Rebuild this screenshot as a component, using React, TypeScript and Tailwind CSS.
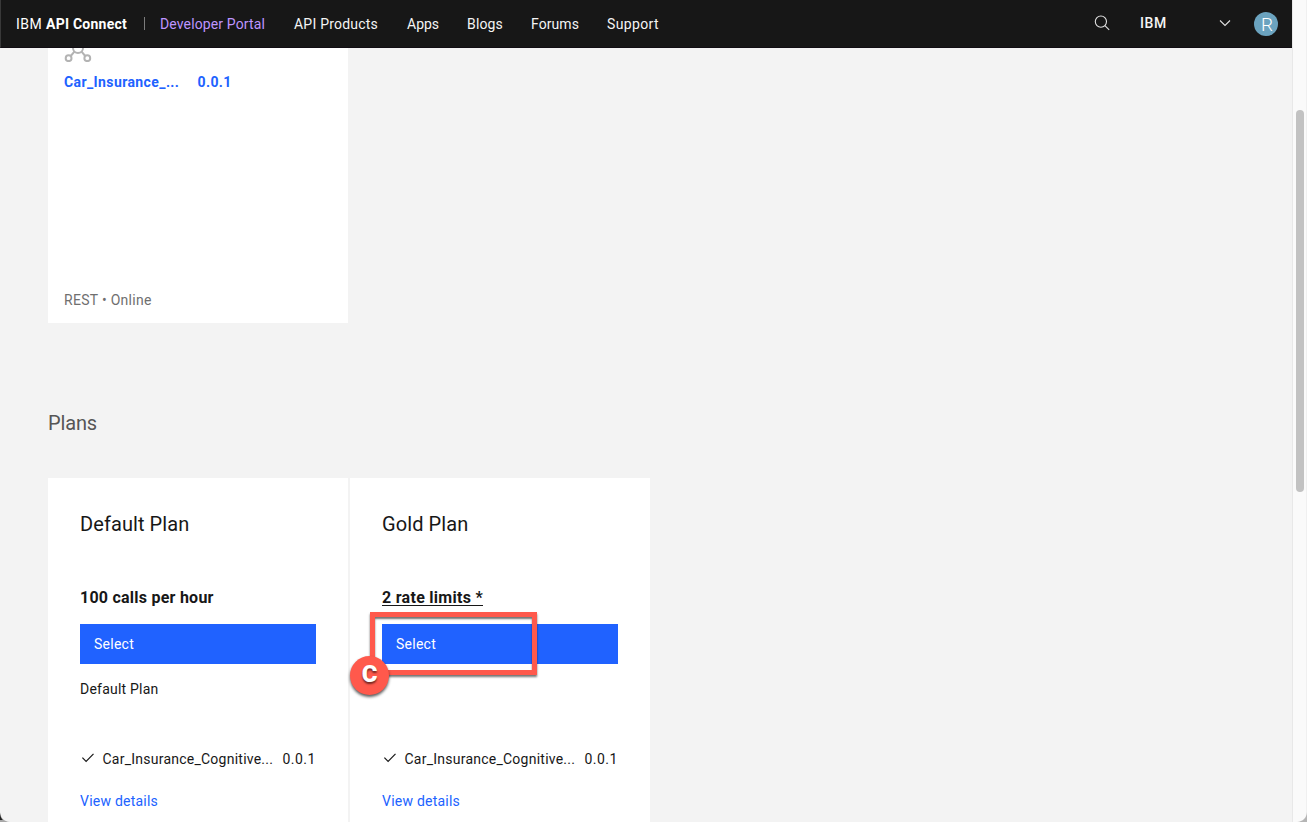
import React from "react";

const NAV = [
  { label: "API Products", className: "w-[113px] tracking-[0.22px]" },
  { label: "Apps", className: "w-[60px]" },
  { label: "Blogs", className: "w-16 tracking-[0.16px]" },
  { label: "Forums", className: "w-[76px] tracking-[0.08px]" },
  { label: "Support", className: "w-[52px] tracking-[0.35px]" },
];

function Header() {
  return (
    <header className="flex h-12 w-full shrink-0 items-center border-b border-l border-b-[#110d13] border-l-[#393939] bg-[#171717] pr-3.5 pl-[15px] text-sm leading-[18px] text-[#f4f4f4]">
      <div className="flex w-32 whitespace-pre text-white">
        <span className="w-[30px] tracking-[0.44px]">IBM </span>
        <b className="font-bold tracking-[0.24px]">API Connect</b>
      </div>
      <div className="h-[13px] w-px bg-[#7c7c7c]" />
      <a className="ml-[15px] w-[134px] tracking-[0.13px] text-[#be95ff]">Developer Portal</a>
      <nav className="flex">
        {NAV.map((item) => (
          <a key={item.label} className={item.className}>
            {item.label}
          </a>
        ))}
      </nav>
      <div className="ml-auto flex items-center">
        <svg className="mr-[30px] -mt-px size-4" viewBox="0 0 16 16" fill="none" stroke="#e0e0e0" strokeWidth="1.1">
          <circle cx="6.9" cy="6.6" r="5.6" />
          <path d="M10.9 10.6 15.2 14.9" />
        </svg>
        <span className="-mt-0.5 w-[79px] font-medium tracking-[0.6px]">IBM</span>
        <svg className="mr-[23px] -mt-0.5 h-2 w-3" viewBox="0 0 12 8" fill="none" stroke="#e0e0e0" strokeWidth="1.1">
          <path d="M1 1.5 6 6.5 11 1.5" />
        </svg>
        <span className="mt-px flex size-6 items-center justify-center rounded-full bg-[#6ba3bf] pt-px pl-0.5 text-[19px] font-light text-white">R</span>
      </div>
    </header>
  );
}

function ApiIcon() {
  return (
    <svg className="h-7 w-7" viewBox="0 0 28 28" fill="none" stroke="#b3b3b3" strokeWidth="2">
      <circle cx="14" cy="14" r="5" />
      <circle cx="4.6" cy="24.2" r="2.9" />
      <circle cx="23.3" cy="24.2" r="2.9" />
      <circle cx="14" cy="3.5" r="2.5" />
      <path d="M10.4 17.6 6.7 22M17.6 17.6 21.2 22M14 6v3" />
    </svg>
  );
}

function ApiCard() {
  return (
    <article className="flex h-[289px] w-[300px] flex-col bg-white px-4 pb-3.5">
      <ApiIcon />
      <div className="mt-[11px] flex text-sm leading-[18px] font-bold text-[#2062ff]">
        <span className="w-[133.5px] tracking-[0.4px]">Car_Insurance_...</span>
        <span className="tracking-[0.4px]">0.0.1</span>
      </div>
      <p className="mt-auto text-sm leading-[18px] tracking-[0.29px] text-[#6f6f6f]">REST • Online</p>
    </article>
  );
}

type PlanProps = { name: string; limit: string; underlined?: boolean; description?: string; marked?: boolean };

function Callout() {
  return (
    <div className="pointer-events-none absolute -top-3 -left-3 h-[63px] w-[167px] border-[5px] border-[#ff594c] shadow-[0_2px_2px_rgba(0,0,0,0.55),inset_0_2px_2px_rgba(0,0,0,0.55)]">
      <div className="absolute top-[39px] -left-[25px] flex size-[39px] items-center justify-center rounded-full bg-[#ff594c] pb-1 text-[24px] leading-none font-black text-white shadow-[0_2px_3px_rgba(0,0,0,0.65)] [text-shadow:0_2px_2px_rgba(0,0,0,0.55)]">
        C
      </div>
    </div>
  );
}

function PlanCard({ name, limit, underlined, description, marked }: PlanProps) {
  return (
    <article className="flex h-[360px] w-[300px] flex-col bg-white px-8 pt-[33px] text-sm leading-[18px] text-[#171717]">
      <h3 className="text-xl leading-[26px] font-normal tracking-[0.08px]">{name}</h3>
      <p
        className={
          underlined
            ? "mt-[51px] self-start text-base leading-5 font-bold tracking-[0.28px] underline decoration-1 underline-offset-2"
            : "mt-[51px] self-start text-base leading-5 font-bold tracking-[0.24px]"
        }
      >
        {limit}
      </p>
      <div className="relative mt-4">
        <button className="flex h-10 w-full items-center bg-[#2062ff] px-3.5 tracking-[0.25px] text-white">Select</button>
        {marked && <Callout />}
      </div>
      <p className="mt-4 h-[70px] tracking-[0.22px]">{description}</p>
      <div className="flex">
        <svg className="mt-0.5 mr-1.5 h-3 w-4" viewBox="0 0 16 12" fill="none" stroke="#171717" strokeWidth="1.2">
          <path d="M2.4 5.6 6.1 9.3 13.5 1.9" />
        </svg>
        <span className="w-[180.5px] pl-[0.5px] tracking-[0.24px]">Car_Insurance_Cognitive...</span>
        <span className="tracking-[0.45px]">0.0.1</span>
      </div>
      <a className="mt-6 tracking-[0.23px] text-[#2062ff]">View details</a>
    </article>
  );
}

export default function App() {
  return (
    <div className="relative flex h-[822px] w-[1307px] overflow-hidden bg-[#f3f3f3] font-['Roboto',sans-serif]">
      <div className="flex w-[1292px] flex-col">
        <Header />
        <main className="flex min-h-0 flex-1 flex-col overflow-hidden px-12">
          <div className="-mt-[14px] shrink-0">
            <ApiCard />
          </div>
          <h2 className="mt-[87px] shrink-0 text-xl leading-[26px] font-normal tracking-[-0.15px] text-[#565656]">Plans</h2>
          <section className="mt-[42px] flex shrink-0 gap-0.5">
            <PlanCard name="Default Plan" limit="100 calls per hour" description="Default Plan" />
            <PlanCard name="Gold Plan" limit="2 rate limits *" underlined marked />
          </section>
        </main>
      </div>
      <div className="h-full w-[15px] border-x border-l-[#e8e8e8] border-r-[#f0f0f0] bg-[#fafafa] pt-[110px] pl-[3px]">
        <div className="h-[382px] w-2 rounded-full bg-[#c2c2c2]" />
      </div>
      <svg className="absolute bottom-0 left-0 size-2.5" viewBox="0 0 10 10">
        <path d="M0 0C.5 6 4 9.5 10 10H0Z" fill="#a8a8a8" />
        <path d="M0 1C.3 4 1 6 2.8 8H0Z" fill="#222" />
      </svg>
      <svg className="absolute right-0 bottom-0 size-2.5" viewBox="0 0 10 10">
        <path d="M10 0C9.5 6 6 9.5 0 10H10Z" fill="#b5b5b5" />
      </svg>
    </div>
  );
}
